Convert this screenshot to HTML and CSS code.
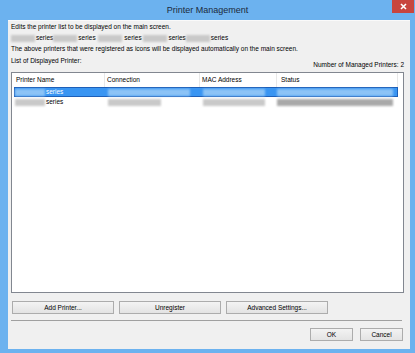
FILE: index.html
```html
<!DOCTYPE html>
<html lang="en">
<head>
  <meta charset="UTF-8">
  <meta name="viewport" content="width=device-width, initial-scale=1.0">
  <title>Printer Management</title>
  <link rel="stylesheet" href="styles.css">
</head>
<body>
  <div class="window">
    <div class="titlebar">
      <span class="title">Printer Management</span>
      <span class="close">
        <svg width="7" height="7" viewBox="0 0 7 7">
          <path d="M1 1 L6 6 M6 1 L1 6" stroke="#fff" stroke-width="1.6"/>
        </svg>
      </span>
    </div>

    <div class="content">
      <div class="intro">
        <p>Edits the printer list to be displayed on the main screen.</p>
        <p class="models"><span class="blur model"></span>series<span class="blur model"></span>series <span class="blur model"></span> series <span class="blur model"></span>series<span class="blur model"></span>series</p>
        <p>The above printers that were registered as icons will be displayed automatically on the main screen.</p>
      </div>

      <div class="list-head">
        <span class="list-label">List of Displayed Printer:</span>
        <span class="count">Number of Managed Printers: 2</span>
      </div>

      <div class="printer-list">
        <div class="list-row list-header">
          <div class="col">Printer Name</div>
          <div class="col">Connection</div>
          <div class="col">MAC Address</div>
          <div class="col">Status</div>
        </div>
        <div class="list-row selected">
          <div class="col col-name"><span class="blur b-name"></span><span class="series">series</span></div>
          <div class="col col-conn"><span class="blur b-conn-long"></span></div>
          <div class="col col-mac"><span class="blur b-mac"></span></div>
          <div class="col col-status"><span class="blur b-status"></span></div>
        </div>
        <div class="list-row">
          <div class="col col-name"><span class="blur b-name"></span><span class="series">series</span></div>
          <div class="col col-conn"><span class="blur b-conn"></span></div>
          <div class="col col-mac"><span class="blur b-mac"></span></div>
          <div class="col col-status"><span class="blur b-status dark"></span></div>
        </div>
      </div>

      <div class="actions">
        <button type="button">Add Printer...</button>
        <button type="button">Unregister</button>
        <button type="button">Advanced Settings...</button>
      </div>

      <div class="separator"></div>

      <div class="dialog-buttons">
        <button type="button">OK</button>
        <button type="button">Cancel</button>
      </div>
    </div>
  </div>
</body>
</html>
```

FILE: styles.css
```css
* {
  margin: 0;
  padding: 0;
  box-sizing: border-box;
  font-family: "Liberation Sans", Arial, sans-serif;
}

body {
  width: 415px;
  height: 353px;
  overflow: hidden;
  background: #6cb2ef;
}

.window {
  width: 415px;
  height: 353px;
  display: flex;
  flex-direction: column;
  background: #6cb2ef;
}

/* title bar */
.titlebar {
  height: 20px;
  display: grid;
  grid-template-columns: 1fr auto 1fr;
  align-items: start;
}

.title {
  grid-column: 2;
  font-size: 9px;
  line-height: 20px;
  color: #1b2a3b;
}

.close {
  grid-column: 3;
  justify-self: end;
  margin-right: 1px;
  width: 22px;
  height: 13px;
  background: #c8453e;
  display: flex;
  align-items: center;
  justify-content: center;
}

/* dialog body */
.content {
  flex: 1;
  margin: 0 5px 4px 8px;
  background: #f0f0f0;
  border-top: 1px solid #fafafa;
  display: flex;
  flex-direction: column;
  padding: 0 6px 8px 3px;
  color: #000;
}

.intro {
  font-size: 6.5px;
  line-height: 11px;
  height: 32px;
  white-space: nowrap;
}

.blur {
  display: inline-block;
  height: 7px;
  vertical-align: middle;
  background: #c9c9c9;
  filter: blur(0.8px);
}

.model {
  width: 24px;
  margin-right: 1px;
}

.list-head {
  height: 19px;
  display: flex;
  justify-content: space-between;
  font-size: 6.5px;
  line-height: 10px;
}

.list-label {
  padding-top: 3px;
}

.count {
  align-self: flex-end;
  padding-bottom: 2px;
}

/* printer list */
.printer-list {
  height: 221px;
  border: 1px solid #828790;
  background: #fff;
  padding: 0 5px 0 2px;
}

.list-row {
  display: grid;
  grid-template-columns: 91px 95px 77px 121px;
  height: 10px;
  font-size: 6.5px;
  line-height: 10px;
  white-space: nowrap;
}

.list-header {
  height: 14px;
  line-height: 14px;
}

.list-header .col {
  padding-left: 2px;
  border-right: 1px solid #e8e8e8;
}

.list-header .col:nth-child(4) {
  padding-left: 4px;
}

.col-name {
  padding-left: 1px;
}

.col-conn,
.col-mac {
  padding-left: 3px;
}

.b-name { width: 30px; }
.b-conn-long { width: 82px; }
.b-conn { width: 53px; }
.b-mac { width: 62px; }
.b-status { width: 116px; }
.b-status.dark { background: #a9a9a9; }

.series {
  margin-left: 1px;
}

.selected {
  background: #3995f2;
  box-shadow: inset 0 0 0 1px #1d5fb8;
  color: #fff;
}

.selected .blur {
  background: #8cc3f6;
}

/* buttons */
button {
  height: 13px;
  border: 1px solid #acacac;
  background: linear-gradient(#f3f3f3, #e3e3e3);
  font-size: 6.5px;
  color: #000;
  cursor: pointer;
}

.actions {
  display: flex;
  gap: 5px;
  margin-top: 8px;
  padding-left: 1px;
}

.actions button {
  width: 102px;
}

.separator {
  height: 1px;
  background: #a0a0a0;
  margin: 6px 2px 0 0;
}

.dialog-buttons {
  display: flex;
  justify-content: flex-end;
  gap: 7px;
  margin-top: 7px;
  padding-right: 1px;
}

.dialog-buttons button {
  width: 43px;
}
```
